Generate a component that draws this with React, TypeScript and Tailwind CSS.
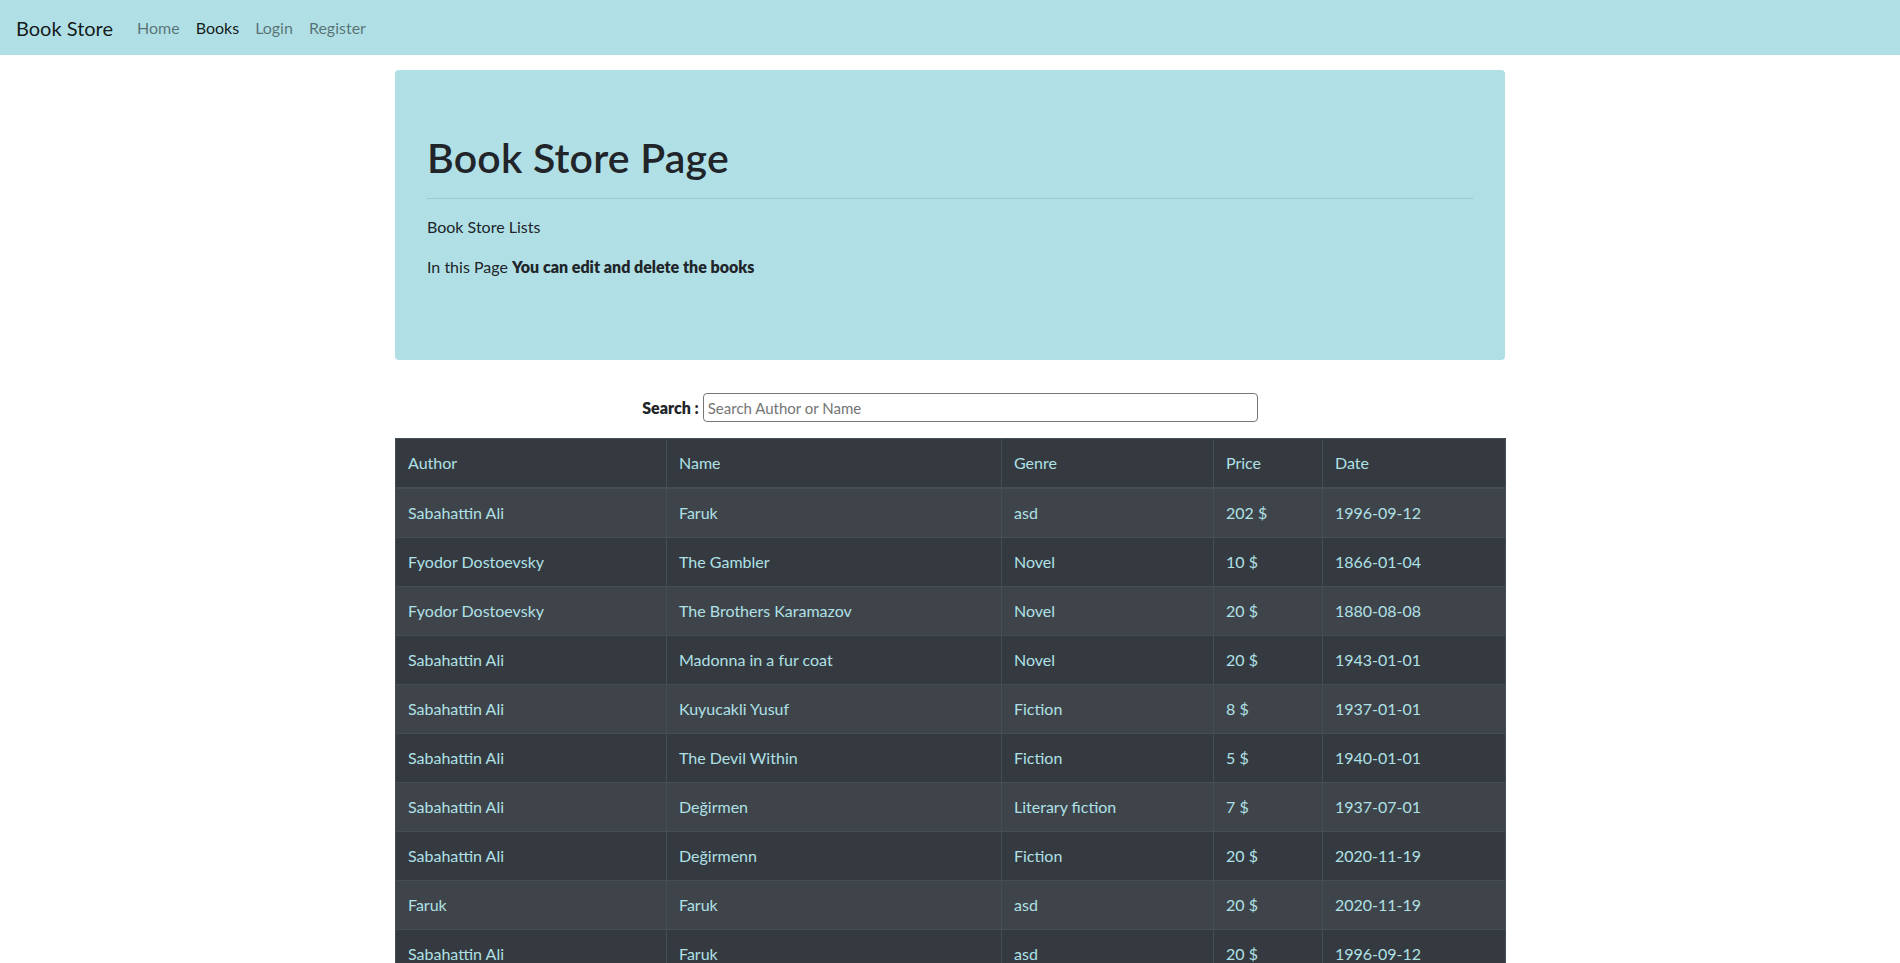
const books = [
  { author: "Sabahattin Ali", name: "Faruk", genre: "asd", price: "202 $", date: "1996-09-12" },
  { author: "Fyodor Dostoevsky", name: "The Gambler", genre: "Novel", price: "10 $", date: "1866-01-04" },
  { author: "Fyodor Dostoevsky", name: "The Brothers Karamazov", genre: "Novel", price: "20 $", date: "1880-08-08" },
  { author: "Sabahattin Ali", name: "Madonna in a fur coat", genre: "Novel", price: "20 $", date: "1943-01-01" },
  { author: "Sabahattin Ali", name: "Kuyucakli Yusuf", genre: "Fiction", price: "8 $", date: "1937-01-01" },
  { author: "Sabahattin Ali", name: "The Devil Within", genre: "Fiction", price: "5 $", date: "1940-01-01" },
  { author: "Sabahattin Ali", name: "Değirmen", genre: "Literary fiction", price: "7 $", date: "1937-07-01" },
  { author: "Sabahattin Ali", name: "Değirmenn", genre: "Fiction", price: "20 $", date: "2020-11-19" },
  { author: "Faruk", name: "Faruk", genre: "asd", price: "20 $", date: "2020-11-19" },
  { author: "Sabahattin Ali", name: "Faruk", genre: "asd", price: "20 $", date: "1996-09-12" },
];

export default function App() {
  return (
    <div className="min-h-screen bg-white text-[#212529] text-base leading-6 font-['Lato','Liberation_Sans',sans-serif]">
      <nav className="flex items-center h-[55px] px-4 bg-[#b0e0e6]">
        <a href="/" className="text-[20px] leading-[30px] mr-4 text-black/90">
          Book Store
        </a>
        <div className="flex">
          <a href="/" className="px-2 text-black/50">Home</a>
          <a href="/books" className="px-2 text-black/90">Books</a>
          <a href="/login" className="px-2 text-black/50">Login</a>
          <a href="/register" className="px-2 text-black/50">Register</a>
        </div>
      </nav>

      <main className="w-[1140px] mx-auto px-[15px]">
        <section className="mt-[15px] mb-[33px] rounded bg-[#b0e0e6] px-8 pt-16 pb-[65px]">
          <h1 className="text-[41px] leading-[48px] font-semibold tracking-[0.2px]">Book Store Page</h1>
          <hr className="my-4 border-t border-black/10" />
          <p className="mb-4">Book Store Lists</p>
          <p className="mb-4">
            In this Page <strong className="font-extrabold">You can edit and delete the books</strong>
          </p>
        </section>

        <div className="flex justify-center items-center mb-4">
          <label className="font-extrabold mr-1">Search :</label>
          <input
            className="w-[555px] h-[29px] px-1 border border-[#767676] rounded-sm text-[15px] placeholder:text-[#757575] outline-none"
            placeholder="Search Author or Name"
          />
        </div>

        <table className="w-full table-fixed border-collapse bg-[#343a40] text-[#b0e0e6] border border-[#454d55]">
          <colgroup>
            <col className="w-[271px]" />
            <col className="w-[335px]" />
            <col className="w-[212px]" />
            <col className="w-[109px]" />
            <col className="w-[183px]" />
          </colgroup>
          <thead>
            <tr>
              {["Author", "Name", "Genre", "Price", "Date"].map((h) => (
                <th
                  key={h}
                  className="text-left font-normal px-3 py-3 border border-[#454d55] border-b-2"
                >
                  {h}
                </th>
              ))}
            </tr>
          </thead>
          <tbody>
            {books.map((b, i) => (
              <tr key={i} className={i % 2 === 0 ? "bg-[#3e444a]" : ""}>
                <td className="px-3 py-3 border border-[#454d55]">{b.author}</td>
                <td className="px-3 py-3 border border-[#454d55]">{b.name}</td>
                <td className="px-3 py-3 border border-[#454d55]">{b.genre}</td>
                <td className="px-3 py-3 border border-[#454d55]">{b.price}</td>
                <td className="px-3 py-3 border border-[#454d55]">{b.date}</td>
              </tr>
            ))}
          </tbody>
        </table>
      </main>
    </div>
  );
}
